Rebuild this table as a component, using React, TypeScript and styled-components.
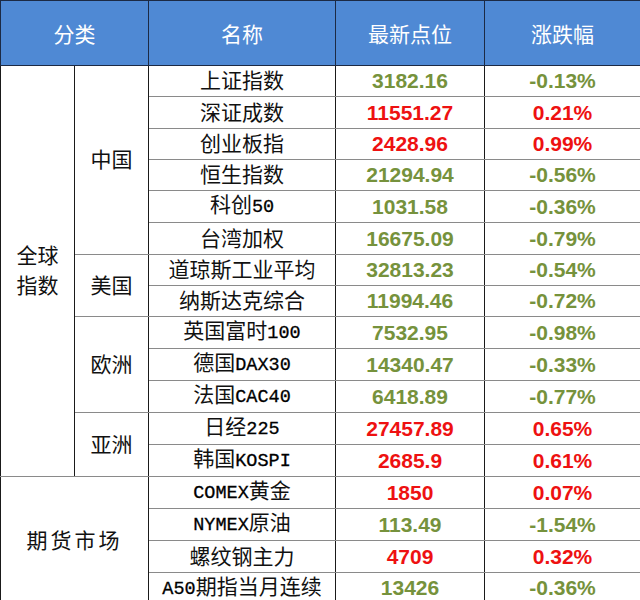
import React from "react";
import styled, { createGlobalStyle } from "styled-components";

const Global = createGlobalStyle`
  html, body { margin: 0; padding: 0; background: #ffffff; }
`;

const Table = styled.table`
  width: 640px;
  table-layout: fixed;
  border-collapse: collapse;
  font-family: "Liberation Serif", "Noto Sans CJK SC", serif;
`;

const HeadRow = styled.tr`
  height: 65px;
`;

const HeadCell = styled.th`
  background: #4f89d4;
  color: #ffffff;
  font-weight: normal;
  font-size: 21px;
  font-family: "Liberation Serif", "Noto Sans CJK SC", serif;
  text-align: center;
  vertical-align: middle;
  border: 1px solid #1c2a44;
  padding: 0;
`;

const BodyRow = styled.tr`
  height: 31.35px;
`;

const CatCell = styled.td<{ $wide?: boolean }>`
  font-size: 21px;
  color: #111111;
  text-align: center;
  vertical-align: middle;
  line-height: 30px;
  border-left: 1px solid #1a1a1a;
  border-right: 1px solid #1a1a1a;
  border-top: 1px solid #8a8a8a;
  border-bottom: 1px solid #8a8a8a;
  padding: 0;
  letter-spacing: ${(p) => (p.$wide ? "3px" : "0")};
`;

const NameCell = styled.td`
  font-size: 21px;
  color: #111111;
  text-align: center;
  vertical-align: middle;
  white-space: nowrap;
  border: 1px solid #8a8a8a;
  border-left: 1px solid #1a1a1a;
  border-right: 1px solid #1a1a1a;
  padding: 0;
  line-height: 28px;
`;

const Latin = styled.span`
  font-family: "Liberation Mono", monospace;
  font-size: 18.5px;
  color: #000000;
  -webkit-text-stroke: 0.3px #000000;
`;

const NumCell = styled.td<{ $up: boolean }>`
  font-family: "Liberation Sans", Arial, sans-serif;
  font-weight: bold;
  font-size: 21px;
  color: ${(p) => (p.$up ? "#ee1111" : "#76923c")};
  text-align: center;
  vertical-align: middle;
  border: 1px solid #8a8a8a;
  border-left: 1px solid #1a1a1a;
  border-right: 1px solid #1a1a1a;
  padding: 0;
  line-height: 28px;
`;

type Row = { name: string; price: string; pct: string };

const rows: Row[] = [
  { name: "上证指数", price: "3182.16", pct: "-0.13%" },
  { name: "深证成数", price: "11551.27", pct: "0.21%" },
  { name: "创业板指", price: "2428.96", pct: "0.99%" },
  { name: "恒生指数", price: "21294.94", pct: "-0.56%" },
  { name: "科创50", price: "1031.58", pct: "-0.36%" },
  { name: "台湾加权", price: "16675.09", pct: "-0.79%" },
  { name: "道琼斯工业平均", price: "32813.23", pct: "-0.54%" },
  { name: "纳斯达克综合", price: "11994.46", pct: "-0.72%" },
  { name: "英国富时100", price: "7532.95", pct: "-0.98%" },
  { name: "德国DAX30", price: "14340.47", pct: "-0.33%" },
  { name: "法国CAC40", price: "6418.89", pct: "-0.77%" },
  { name: "日经225", price: "27457.89", pct: "0.65%" },
  { name: "韩国KOSPI", price: "2685.9", pct: "0.61%" },
  { name: "COMEX黄金", price: "1850", pct: "0.07%" },
  { name: "NYMEX原油", price: "113.49", pct: "-1.54%" },
  { name: "螺纹钢主力", price: "4709", pct: "0.32%" },
  { name: "A50期指当月连续", price: "13426", pct: "-0.36%" },
];

const renderName = (name: string) =>
  name.split(/([A-Za-z0-9]+)/).map((part, i) =>
    /^[A-Za-z0-9]+$/.test(part) ? <Latin key={i}>{part}</Latin> : <React.Fragment key={i}>{part}</React.Fragment>
  );

const regions: Record<number, { label: string; span: number }> = {
  0: { label: "中国", span: 6 },
  6: { label: "美国", span: 2 },
  8: { label: "欧洲", span: 3 },
  11: { label: "亚洲", span: 2 },
};

export default function App() {
  return (
    <>
      <Global />
      <Table>
        <colgroup>
          <col style={{ width: 74 }} />
          <col style={{ width: 74 }} />
          <col style={{ width: 187 }} />
          <col style={{ width: 149 }} />
          <col style={{ width: 156 }} />
        </colgroup>
        <thead>
          <HeadRow>
            <HeadCell colSpan={2}>分类</HeadCell>
            <HeadCell>名称</HeadCell>
            <HeadCell>最新点位</HeadCell>
            <HeadCell>涨跌幅</HeadCell>
          </HeadRow>
        </thead>
        <tbody>
          {rows.map((r, i) => {
            const up = !r.pct.startsWith("-");
            return (
              <BodyRow key={r.name}>
                {i === 0 && (
                  <CatCell rowSpan={13}>
                    全球
                    <br />
                    指数
                  </CatCell>
                )}
                {i < 13 && regions[i] && (
                  <CatCell rowSpan={regions[i].span}>{regions[i].label}</CatCell>
                )}
                {i === 13 && (
                  <CatCell rowSpan={4} colSpan={2} $wide>
                    期货市场
                  </CatCell>
                )}
                <NameCell>{renderName(r.name)}</NameCell>
                <NumCell $up={up}>{r.price}</NumCell>
                <NumCell $up={up}>{r.pct}</NumCell>
              </BodyRow>
            );
          })}
        </tbody>
      </Table>
    </>
  );
}
